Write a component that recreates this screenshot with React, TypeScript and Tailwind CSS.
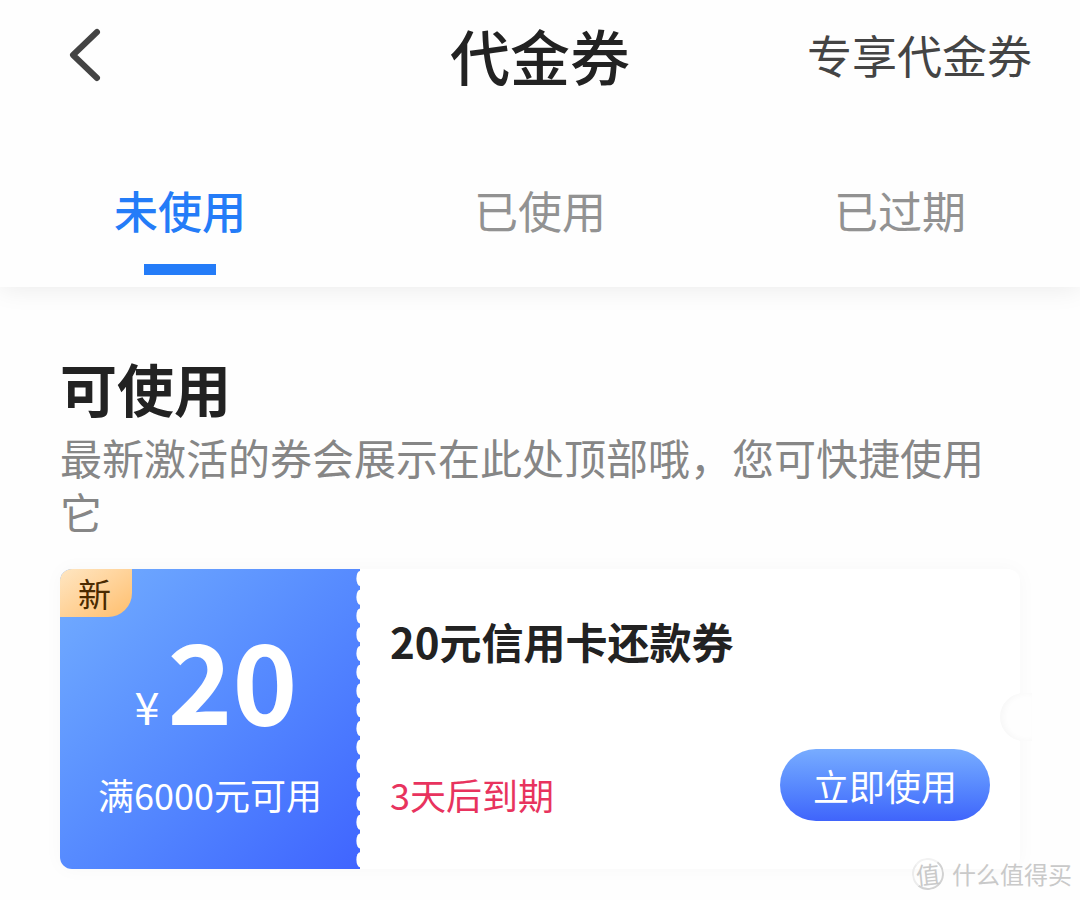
import { useState } from 'react';

const tabs = ['未使用', '已使用', '已过期'];

function Header() {
  return (
    <header className="grid grid-cols-[1fr_auto_1fr] items-center h-[110px] px-12">
      <button type="button" aria-label="返回" className="justify-self-start">
        <svg width="60" height="60" viewBox="0 0 60 60" fill="none">
          <path
            d="M49 7 L25 30 L49 53"
            stroke="#444444"
            strokeWidth="6"
            strokeLinecap="round"
            strokeLinejoin="round"
          />
        </svg>
      </button>
      <h1 className="text-[60px] leading-[72px] font-medium text-[#222222]">代金券</h1>
      <a href="#exclusive" className="justify-self-end text-[45px] leading-[72px] text-[#444444]">
        专享代金券
      </a>
    </header>
  );
}

function TabBar() {
  const [active, setActive] = useState(0);

  return (
    <div role="tablist" className="grid grid-cols-3 pt-16">
      {tabs.map((tab, i) => (
        <button
          key={tab}
          type="button"
          role="tab"
          aria-selected={i === active}
          onClick={() => setActive(i)}
          className={`flex flex-col items-center pb-3 text-[44px] leading-[72px] ${
            i === active ? 'font-medium text-[#247cf8]' : 'text-[#929292]'
          }`}
        >
          {tab}
          <span className={`mt-[18px] h-[11px] w-18 ${i === active ? 'bg-[#247cf8]' : ''}`} />
        </button>
      ))}
    </div>
  );
}

// Perforated edge: a column of white bites out of the blue stub
function Perforation() {
  return (
    <svg
      className="absolute inset-y-0 right-0 h-full w-1"
      viewBox="0 0 4 320"
      preserveAspectRatio="none"
      aria-hidden="true"
    >
      {Array.from({ length: 16 }, (_, i) => (
        <ellipse key={i} cx="4" cy={10 + i * 20} rx="3.6" ry="8" fill="#ffffff" />
      ))}
    </svg>
  );
}

function Coupon() {
  return (
    <article className="relative flex mt-[31px] rounded-xl bg-white shadow-[0_0_20px_rgba(0,0,0,0.03)]">
      <div className="relative flex w-[300px] shrink-0 flex-col items-center overflow-hidden rounded-l-xl bg-linear-to-br from-[#73adff] to-[#4064ff] pt-12 pb-[51px] text-white">
        <span className="absolute left-0 top-0 h-12 w-18 rounded-br-3xl bg-linear-to-br from-[#fee6c2] to-[#ffbe6b] pl-[18px] text-[33px] leading-[48px] text-[#4a2a00]">
          新
        </span>
        <div className="flex items-baseline gap-2 pl-3">
          <span className="text-[45px] leading-none">¥</span>
          <span className="text-[110px] leading-[120px] font-bold">20</span>
        </div>
        <p className="mt-[33px] text-4xl leading-[48px]">满6000元可用</p>
        <Perforation />
      </div>
      <div className="flex flex-1 flex-col justify-between px-[30px] pt-[42px] pb-12">
        <h3 className="text-[42px] leading-[60px] font-bold text-[#222222]">20元信用卡还款券</h3>
        <div className="flex items-end justify-between">
          <p className="text-4xl leading-[54px] text-[#e8335e]">3天后到期</p>
          <button
            type="button"
            className="h-18 w-[210px] rounded-full bg-linear-to-b from-[#78acff] to-[#4064fb] text-4xl text-white"
          >
            立即使用
          </button>
        </div>
      </div>
      <span className="absolute -right-3 top-31 h-12 w-8 rounded-l-full bg-[#fefefe] shadow-[inset_3px_0_6px_rgba(0,0,0,0.03)]" />
    </article>
  );
}

function Watermark() {
  return (
    <div className="absolute right-2 bottom-2 flex items-center gap-2 text-2xl leading-9 text-[#c9c9c9]">
      <span className="flex size-8 -rotate-6 items-center justify-center rounded-full border-2 border-[#d2d2d2] border-l-[#ececec] border-t-[#f2f2f2]">
        值
      </span>
      什么值得买
    </div>
  );
}

export default function App() {
  return (
    <div className="relative min-h-screen bg-[#fefefe] font-['Noto_Sans_CJK_SC',sans-serif]">
      <div className="bg-[#fefefe] shadow-[0_2px_24px_rgba(0,0,0,0.08)]">
        <Header />
        <TabBar />
      </div>
      <main className="px-[60px] pt-16 pb-7">
        <h2 className="text-[57px] leading-[72px] font-bold text-[#222222]">可使用</h2>
        <p className="mt-[7px] text-[42px] leading-[54px] text-[#868686]">
          最新激活的券会展示在此处顶部哦，您可快捷使用它
        </p>
        <Coupon />
      </main>
      <Watermark />
    </div>
  );
}
